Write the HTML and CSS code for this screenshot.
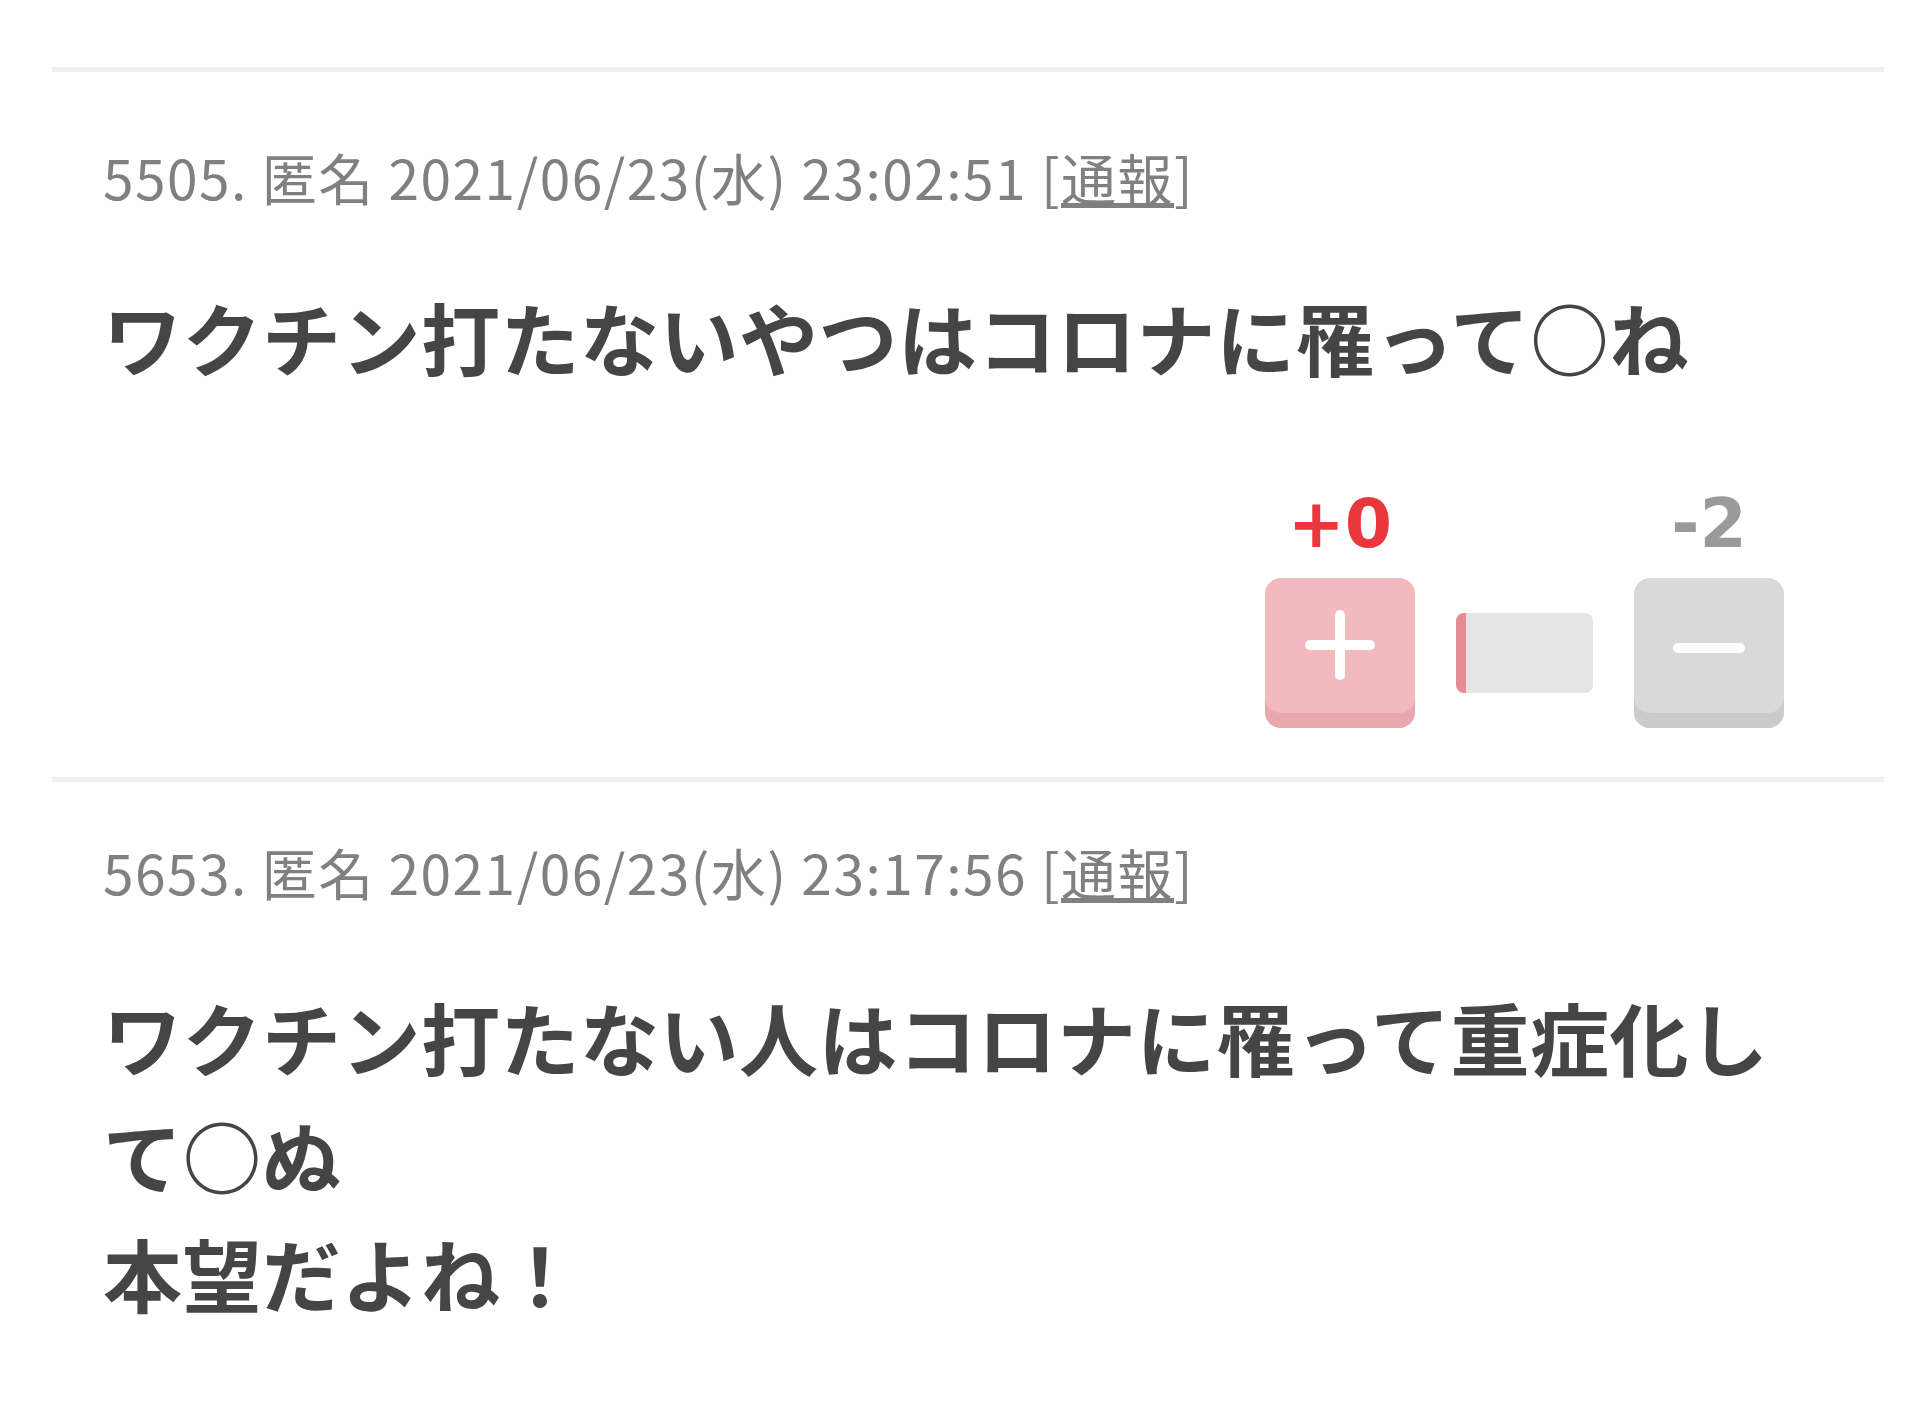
FILE: index.html
```html
<!DOCTYPE html>
<html lang="ja">
  <head>
    <meta charset="UTF-8" />
    <meta name="viewport" content="width=device-width, initial-scale=1.0" />
    <title>コメント</title>
    <link rel="stylesheet" href="styles.css">
  </head>
  <body>
    <div class="thread">
      <div class="comment first">
        <div class="comment-meta">5505. 匿名 2021/06/23(水) 23:02:51 [<a href="#">通報</a>]</div>
        <div class="comment-body">ワクチン打たないやつはコロナに罹って○ね</div>
        <div class="vote">
          <div class="vote-col">
            <span class="vote-count plus">+0</span>
            <button class="vote-btn plus" type="button">
              <svg width="72" height="72" viewBox="0 0 72 72">
                <path d="M36 6v60M6 36h60" stroke="#fff" stroke-width="10" stroke-linecap="round" fill="none" />
              </svg>
            </button>
          </div>
          <div class="vote-bar"><span class="vote-bar-fill" style="width: 0%"></span></div>
          <div class="vote-col">
            <span class="vote-count minus">-2</span>
            <button class="vote-btn minus" type="button">
              <svg width="74" height="72" viewBox="0 0 74 72">
                <path d="M6 39h62" stroke="#fff" stroke-width="10" stroke-linecap="round" fill="none" />
              </svg>
            </button>
          </div>
        </div>
      </div>

      <div class="comment">
        <div class="comment-meta">5653. 匿名 2021/06/23(水) 23:17:56 [<a href="#">通報</a>]</div>
        <div class="comment-body">ワクチン打たない人はコロナに罹って重症化して○ぬ<br />本望だよね！</div>
      </div>
    </div>
  </body>
</html>
```

FILE: styles.css
```css
body {
  font-family: "Noto Sans CJK JP", "Noto Sans", sans-serif;
  background-color: #fff;
  margin: 0;
  padding: 0;
}

.thread {
  margin: 67px 44px 0 52px;
}

.comment {
  border-top: 5px solid #efefef;
  padding: 63px 95px 0 51px;
}

.comment + .comment {
  padding-top: 48px;
}

.comment-meta {
  font-size: 55px;
  line-height: 82px;
  letter-spacing: 1.5px;
  color: #808080;
  white-space: nowrap;
}

.comment-meta a {
  color: #808080;
  text-decoration: underline;
}

.comment-body {
  margin-top: 61px;
  font-size: 79px;
  line-height: 118px;
  letter-spacing: 0.5px;
  font-weight: bold;
  color: #454545;
}

.comment + .comment .comment-body {
  margin-top: 66px;
}

.vote {
  display: flex;
  justify-content: flex-end;
  align-items: flex-end;
  gap: 41px;
  margin-top: 90px;
  margin-right: 5px;
  padding-bottom: 49px;
}

.vote-col {
  display: flex;
  flex-direction: column;
  align-items: center;
  gap: 16px;
}

.vote-count {
  font-family: "DejaVu Sans", sans-serif;
  font-size: 68px;
  line-height: 76px;
  font-weight: bold;
}

.vote-count.plus {
  color: #e8383e;
}

.vote-count.minus {
  color: #9a9a9a;
}

.vote-btn {
  width: 150px;
  height: 150px;
  border: none;
  border-radius: 16px;
  padding: 0 0 16px;
  display: flex;
  justify-content: center;
  align-items: center;
  cursor: pointer;
}

.vote-btn.plus {
  background-color: #f2b9bf;
  box-shadow: inset 0 -15px 0 #e9a8ae;
}

.vote-btn.minus {
  background-color: #d9d9d9;
  box-shadow: inset 0 -15px 0 #cbcbcb;
}

.vote-bar {
  width: 127px;
  height: 80px;
  margin-bottom: 35px;
  background-color: #e5e5e5;
  border-left: 10px solid #e68c93;
  border-radius: 8px;
  overflow: hidden;
}

.vote-bar-fill {
  display: block;
  height: 100%;
  background-color: #e68c93;
}
```
